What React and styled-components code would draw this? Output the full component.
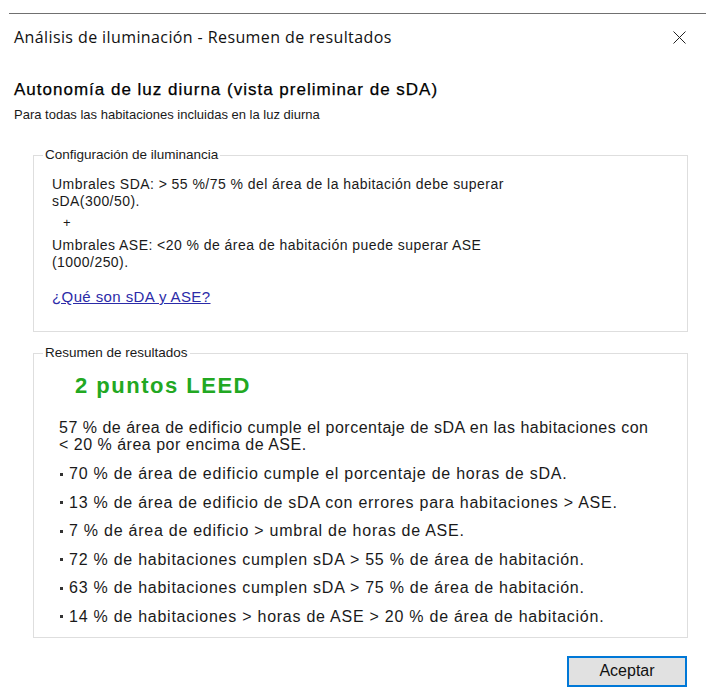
import styled, { createGlobalStyle } from "styled-components";

const GlobalStyle = createGlobalStyle`
  html, body {
    margin: 0;
    padding: 0;
    background: #ffffff;
  }
  body {
    font-family: "Liberation Sans", Arial, sans-serif;
    color: #1a1a1a;
  }
`;

const Dialog = styled.div`
  margin: 13px 0 0 9px;
  border-top: 1px solid #707070;
  padding: 0 18px 0 5px;
  background: #fff;
`;

const TitleBar = styled.div`
  height: 46px;
  display: flex;
  align-items: center;
  justify-content: space-between;
`;

const Title = styled.div`
  font-family: "Open Sans", "Noto Sans", sans-serif;
  font-size: 16px;
  letter-spacing: 0.4px;
  color: #111;
`;

const CloseButton = styled.button`
  border: none;
  background: none;
  padding: 0;
  margin-right: 2px;
  display: flex;
  color: #222;
`;

const Heading = styled.h1`
  margin: 20px 0 0;
  font-size: 17px;
  line-height: 20px;
  letter-spacing: 1px;
  font-weight: normal;
  color: #000;
  -webkit-text-stroke: 0.25px #000;
`;

const Subtitle = styled.p`
  margin: 7px 0 0;
  font-size: 13px;
  line-height: 16px;
  color: #1a1a1a;
`;

const Group = styled.fieldset`
  margin: ${(p) => p.$gap}px 0 0 19px;
  border: 1px solid #dedede;
  padding: 0 18px ${(p) => p.$bottom}px ${(p) => p.$inset}px;
  min-width: 0;
`;

const Legend = styled.legend`
  margin-left: ${(p) => p.$shift}px;
  padding: 0 2px;
  font-size: 13.5px;
  line-height: 16px;
  color: #1a1a1a;
`;

const Note = styled.p`
  margin: ${(p) => p.$top}px 0 0;
  font-size: 14px;
  line-height: 16.5px;
  letter-spacing: 0.45px;
  max-width: 465px;
`;

const Plus = styled.div`
  margin: 6px 0 0 11px;
  font-size: 13px;
  line-height: 16px;
`;

const HelpLink = styled.a`
  display: inline-block;
  margin-top: 19px;
  font-size: 15px;
  line-height: 16px;
  letter-spacing: 0.4px;
  color: #2b2ba8;
  text-decoration: underline;
`;

const Points = styled.div`
  margin: 12px 0 0 16px;
  font-size: 22px;
  line-height: 26px;
  letter-spacing: 1.5px;
  font-weight: bold;
  color: #22a822;
`;

const Summary = styled.p`
  margin: 20px 0 0;
  font-size: 16px;
  line-height: 17px;
  letter-spacing: 0.5px;
  max-width: 595px;
`;

const Stats = styled.ul`
  list-style: none;
  margin: 12px 0 0;
  padding: 0;
  display: flex;
  flex-direction: column;
  gap: 11.6px;
`;

const Stat = styled.li`
  display: flex;
  align-items: center;
  font-size: 16px;
  line-height: 17px;
  letter-spacing: 0.75px;

  &::before {
    content: "";
    flex: none;
    width: 3px;
    height: 3px;
    margin: 1px 6px 0 1px;
    background: #333;
  }
`;

const Footer = styled.div`
  display: flex;
  justify-content: flex-end;
  margin-top: 18px;
  padding-right: 1px;
`;

const Button = styled.button`
  width: 120px;
  height: 31px;
  border: 2px solid #0078d7;
  background: #e1e1e1;
  font-family: "Liberation Sans", Arial, sans-serif;
  font-size: 16px;
  color: #111;
  padding: 0;
`;

const stats = [
  "70 % de área de edificio cumple el porcentaje de horas de sDA.",
  "13 % de área de edificio de sDA con errores para habitaciones > ASE.",
  "7 % de área de edificio > umbral de horas de ASE.",
  "72 % de habitaciones cumplen sDA > 55 % de área de habitación.",
  "63 % de habitaciones cumplen sDA > 75 % de área de habitación.",
  "14 % de habitaciones > horas de ASE > 20 % de área de habitación.",
];

export default function App() {
  return (
    <>
      <GlobalStyle />
      <Dialog>
        <TitleBar>
          <Title>Análisis de iluminación - Resumen de resultados</Title>
          <CloseButton aria-label="Cerrar">
            <svg width="13" height="13" viewBox="0 0 13 13">
              <path d="M0.5 0.5L12.5 12.5M12.5 0.5L0.5 12.5" stroke="currentColor" strokeWidth="1" />
            </svg>
          </CloseButton>
        </TitleBar>

        <Heading>Autonomía de luz diurna (vista preliminar de sDA)</Heading>
        <Subtitle>Para todas las habitaciones incluidas en la luz diurna</Subtitle>

        <Group $gap={24} $inset={18} $bottom={25}>
          <Legend $shift={-9}>Configuración de iluminancia</Legend>
          <Note $top={13}>
            Umbrales SDA: &gt; 55 %/75 % del área de la habitación debe superar sDA(300/50).
          </Note>
          <Plus>+</Plus>
          <Note $top={6}>
            Umbrales ASE: &lt;20 % de área de habitación puede superar ASE (1000/250).
          </Note>
          <HelpLink href="#">¿Qué son sDA y ASE?</HelpLink>
        </Group>

        <Group $gap={13} $inset={25} $bottom={12}>
          <Legend $shift={-16}>Resumen de resultados</Legend>
          <Points>2 puntos LEED</Points>
          <Summary>
            57 % de área de edificio cumple el porcentaje de sDA en las habitaciones con &lt; 20 % área por encima de ASE.
          </Summary>
          <Stats>
            {stats.map((s) => (
              <Stat key={s}>{s}</Stat>
            ))}
          </Stats>
        </Group>

        <Footer>
          <Button>Aceptar</Button>
        </Footer>
      </Dialog>
    </>
  );
}
